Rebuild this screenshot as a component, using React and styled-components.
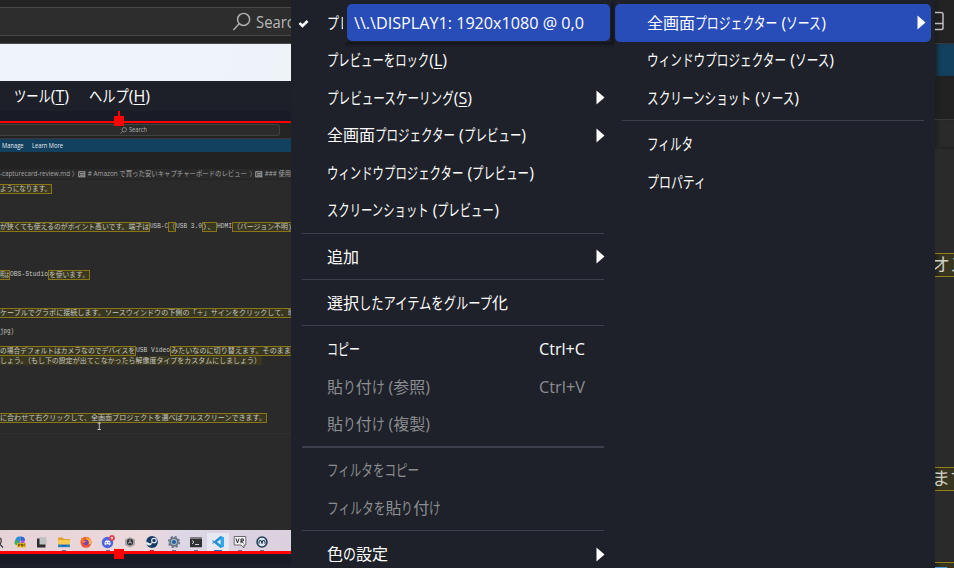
import React, { useLayoutEffect, useRef } from "react";
import styled, { createGlobalStyle } from "styled-components";

const Global = createGlobalStyle`
  * { box-sizing: border-box; }
  body { margin: 0; overflow: hidden; background: #1e2129; }
  svg { display: block; flex: none; }
`;

const Screen = styled.div`
  position: relative;
  display: grid;
  grid-template-columns: 291px 644px 19px;
  width: 954px;
  height: 568px;
  overflow: hidden;
  background: #1e2129;
  color: #fefefe;
  font-family: "Open Sans", "Noto Sans CJK JP", sans-serif;
`;

/* ---------- text that is condensed to a given width ---------- */

const FitBox = styled.span`
  display: inline-block;
  flex: none;
  white-space: pre;
  width: ${(p) => p.$w}px;
`;
const Run = styled.span`
  display: inline-block;
  white-space: pre;
  transform-origin: 0 50%;
`;
const Mnemonic = styled.span`
  text-decoration: underline;
  text-decoration-thickness: 1px;
  text-underline-offset: 2px;
`;

const KANA = /([\u3040-\u30ff\uff0b\u3001\u3002\uff08\uff09\u300c\u300d]+)/;

function renderRun(run) {
  const i = run.indexOf("&");
  if (i < 0) return run;
  return (
    <>
      {run.slice(0, i)}
      <Mnemonic>{run[i + 1]}</Mnemonic>
      {run.slice(i + 2)}
    </>
  );
}

/* Kana runs absorb the squeeze; kanji and latin keep their widths unless `all` is set. */
function Fit({ text, w, all }) {
  const ref = useRef(null);
  const runs = all ? [text] : text.split(KANA).filter(Boolean);
  const flexible = (r) => all || KANA.test(r) || runs.length === 1;
  useLayoutEffect(() => {
    const els = [...ref.current.children];
    els.forEach((el) => {
      el.style.width = "auto";
      el.style.transform = "none";
    });
    const sizes = els.map((el) => el.getBoundingClientRect().width);
    let fixed = 0;
    let loose = 0;
    sizes.forEach((s, i) => (flexible(runs[i]) ? (loose += s) : (fixed += s)));
    const k = loose ? (w - fixed) / loose : 1;
    els.forEach((el, i) => {
      if (!flexible(runs[i])) return;
      el.style.width = `${sizes[i] * k}px`;
      el.style.transform = `scaleX(${k})`;
    });
  }, [text, w, all]);
  return (
    <FitBox ref={ref} $w={w}>
      {runs.map((r, i) => (
        <Run key={i}>{renderRun(r)}</Run>
      ))}
    </FitBox>
  );
}

/* ---------- menus ---------- */

const Menus = styled.div`
  display: grid;
  grid-template-columns: 320px 324px;
  background: #1e2129;
`;
const Menu = styled.div`
  display: flex;
  flex-direction: column;
  padding: 4px ${(p) => (p.$second ? 4 : 0)}px 0 4px;
`;
const Item = styled.div`
  display: flex;
  align-items: center;
  flex: none;
  height: 37.5px;
  padding: 0 5px 0 32px;
  border-radius: 5px;
  font-size: 16px;
  line-height: 24px;
  color: ${(p) => (p.$disabled ? "#8c8d91" : "#fefefe")};
  background: ${(p) => (p.$active ? "#284cb8" : "transparent")};
`;
const CheckItem = styled(Item)`
  padding-left: 3px;
  gap: 18px;
`;
const Shortcut = styled.span`
  margin-left: auto;
  margin-right: 21.5px;
`;
const Arrow = styled.svg`
  margin-left: auto;
  margin-right: ${(p) => (p.$second ? 0.5 : 1)}px;
`;
const Separator = styled.div`
  flex: none;
  height: 8.75px;
  margin: 0 7px;
  padding-top: ${(p) => (p.$thick ? 3.25 : 3.75)}px;
  &::before {
    content: "";
    display: block;
    height: ${(p) => (p.$thick ? 2 : 1)}px;
    background: #3c404d;
  }
`;
const Popup = styled.div`
  position: absolute;
  left: 343px;
  top: 0;
  width: 268px;
  height: 42px;
  padding: 4px 1px 0 4px;
  background: #1e2129;
  box-shadow: 3px 3px 2px #14161c;
`;
const PopupItem = styled(Item)`
  height: 37px;
  padding: 0 0 0 7px;
`;

const RightArrow = ({ second }) => (
  <Arrow $second={second} width="9" height="15" viewBox="0 0 9 15">
    <path d="M0.5 0.5 L8.5 7.5 L0.5 14.5 Z" fill="#fff" />
  </Arrow>
);

const MAIN = [
  { t: "プレビューをロック(&L)", w: 120 },
  { t: "プレビュースケーリング(&S)", w: 145, sub: true },
  { t: "全画面プロジェクター (プレビュー)", w: 199, sub: true },
  { t: "ウィンドウプロジェクター (プレビュー)", w: 207 },
  { t: "スクリーンショット (プレビュー)", w: 172 },
  { sep: true },
  { t: "追加", w: 32, sub: true },
  { sep: true },
  { t: "選択したアイテムをグループ化", w: 181 },
  { sep: true },
  { t: "コピー", w: 33, key: "Ctrl+C" },
  { t: "貼り付け (参照)", w: 103, key: "Ctrl+V", disabled: true },
  { t: "貼り付け (複製)", w: 103, disabled: true },
  { sep: true, thick: true },
  { t: "フィルタをコピー", w: 92, disabled: true },
  { t: "フィルタを貼り付け", w: 114, disabled: true },
  { sep: true },
  { t: "色の設定", w: 61, sub: true },
];
const SOURCE = [
  { t: "全画面プロジェクター (ソース)", w: 179, sub: true, active: true },
  { t: "ウィンドウプロジェクター (ソース)", w: 187 },
  { t: "スクリーンショット (ソース)", w: 152 },
  { sep: true },
  { t: "フィルタ", w: 46 },
  { t: "プロパティ", w: 59 },
];

const MenuEntries = ({ items, second }) =>
  items.map((it, i) =>
    it.sep ? (
      <Separator key={i} $thick={it.thick} />
    ) : (
      <Item key={i} $active={it.active} $disabled={it.disabled}>
        <Fit text={it.t} w={it.w} />
        {it.key && (
          <Shortcut>
            <Fit text={it.key} w={46} />
          </Shortcut>
        )}
        {it.sub && <RightArrow second={second} />}
      </Item>
    )
  );

/* ---------- window behind the menu ---------- */

const Desktop = styled.div`
  display: flex;
  flex-direction: column;
  overflow: hidden;
  & > * { flex: none; }
`;
const TitleArea = styled.div`
  height: 44px;
  padding-top: 7px;
  background: #232323;
  border-bottom: 1px solid #4a4a4a;
`;
const SearchField = styled.div`
  display: flex;
  align-items: center;
  height: 29px;
  padding-left: 232px;
  gap: 5px;
  background: #2d2d2d;
  border-top: 1px solid #484848;
  border-bottom: 1px solid #484848;
  color: #b8b8b8;
  font-size: 16px;
  line-height: 24px;
  white-space: pre;
  overflow: hidden;
`;
const WhiteBar = styled.div`
  height: 37px;
  background: linear-gradient(100deg, #eef3fc 75%, #eef3f8);
`;
const MenuBar = styled.div`
  display: flex;
  align-items: center;
  height: 30px;
  padding: 0 0 1px 14px;
  gap: 20px;
  background: #1e2029;
  font-size: 16px;
  line-height: 24px;
`;
const PreviewMargin = styled.div`
  height: 10px;
  background: #191b26;
`;
const RedLine = styled.div`
  flex: none;
  height: ${(p) => p.$h}px;
  background: #fe0000;
`;
const Handle = styled.div`
  position: absolute;
  left: 114px;
  top: ${(p) => p.$y}px;
  width: 10px;
  height: 10px;
  background: #fe0000;
`;
const Stem = styled.div`
  position: absolute;
  left: 118px;
  top: 111px;
  width: 2px;
  height: 6px;
  background: #fe0000;
`;

/* ---------- captured editor ---------- */

const SmallTitle = styled.div`
  height: 16px;
  padding-top: 1px;
  background: #242424;
  border-bottom: 1px solid #373737;
`;
const SmallSearch = styled.div`
  display: flex;
  align-items: center;
  width: 280px;
  height: 12px;
  padding-left: 120px;
  gap: 2px;
  border: 1px solid #414141;
  border-left: 0;
  border-radius: 0 3px 3px 0;
  background: #2b2b2b;
  color: #b5b5b5;
  font-size: 6.3px;
  line-height: 10px;
`;
const Banner = styled.div`
  display: flex;
  align-items: center;
  height: 13px;
  padding: 0 0 0 1.5px;
  gap: 9px;
  background: #12405f;
  color: #e2eaf0;
  font-size: 6.3px;
  line-height: 12px;
`;
const Tabs = styled.div`
  height: 17px;
  background: #222222;
`;
const Crumbs = styled.div`
  display: flex;
  align-items: center;
  height: 11px;
  background: #292929;
  border-bottom: 1px solid #242424;
  color: #a4a4a4;
  font-size: 6.8px;
  line-height: 10px;
  white-space: nowrap;
`;
const Editor = styled.div`
  display: flex;
  flex-direction: column;
  height: 350px;
  padding-top: 4px;
  background: #2a2a2a;
  color: #c6c6c1;
  font-family: "Liberation Mono", "Noto Sans CJK JP", monospace;
  font-size: 7.4px;
  line-height: 8px;
`;
const Line = styled.div`
  display: flex;
  align-items: center;
  height: 10px;
  margin-top: ${(p) => p.$gap}px;
  white-space: nowrap;
`;
const Piece = styled.span`
  flex: none;
  height: ${(p) => (p.$flat ? 9 : 10)}px;
  overflow: hidden;
  border: ${(p) => (p.$mark ? "1px solid #8a7619" : "0 solid transparent")};
  border-left-width: ${(p) => (p.$mark && !p.$open ? 1 : 0)}px;
  ${(p) => p.$flat && "border-color: #39371f;"}
  background: ${(p) => (p.$mark ? "#39371f" : "transparent")};
`;
const EditorFoot = styled.div`
  margin-top: 10px;
  height: 1px;
  background: #303030;
`;

const LINES = [
  { gap: 0, p: [["ようになります。", 52, 1, 1]] },
  {
    gap: 28,
    p: [
      ["が狭くても使えるのがポイント高いです。端子は", 150, 1, 1],
      ["USB-C", 18],
      ["（", 8, 1],
      ["USB 3.0", 26],
      ["）、", 15, 1],
      ["HDMI", 15],
      ["（バージョン不明)", 61, 1],
    ],
  },
  { gap: 38, p: [["明は", 10, 1, 1], ["OBS-Studio", 38], ["を使います。", 42, 1]] },
  {
    gap: 28,
    p: [["ケーブルでグラボに接続します。ソースウインドウの下側の「＋」サインをクリックして、映", 296, 1, 1]],
  },
  { gap: 9, p: [["jpg)", 14]] },
  {
    gap: 9,
    p: [
      ["の場合デフォルトはカメラなのでデバイスを", 136, 1, 1],
      ["USB Video", 34],
      ["みたいなのに切り替えます。そのまま", 122, 1],
    ],
  },
  { gap: -1, p: [["しょう。（もし下の設定が出てこなかったら解像度タイプをカスタムにしましょう）", 262, 1, 1, 1]] },
  { gap: 48, p: [["に合わせて右クリックして、全画面プロジェクトを選べばフルスクリーンできます。", 267, 1, 1]] },
];

const Taskbar = styled.div`
  display: flex;
  align-items: flex-start;
  height: 21px;
  padding: 5px 0 0 9px;
  background: linear-gradient(90deg, #e6d3d8, #ecd9dc 50%, #dcd6e6 62%, #dbd0de);
`;
const TaskCell = styled.div`
  display: flex;
  flex-direction: column;
  align-items: center;
  flex: none;
  width: 22px;
  height: 16px;
  &::after {
    content: "";
    width: ${(p) => (p.$on ? 8 : 4)}px;
    height: 1px;
    margin-top: 1px;
    background: ${(p) => p.$dot || "transparent"};
  }
  ${(p) => p.$on && "background: #e8e8f2; box-shadow: 0 -2px 0 #e8e8f2;"}
`;
const BottomArea = styled.div`
  height: 14px;
  background: #191b26;
  border-bottom: 4px solid #1e2029;
`;
const Caret = styled.svg`
  position: absolute;
  left: 96px;
  top: 422px;
`;

const Magnifier = ({ size, color, sw }) => (
  <svg width={size} height={size} viewBox="0 0 18 18" fill="none" stroke={color} strokeWidth={sw}>
    <circle cx="11" cy="7" r="5.7" />
    <path d="M7 11 L1.3 17" />
  </svg>
);
const SymbolBox = () => (
  <svg width="8" height="7" viewBox="0 0 8 7" fill="none" stroke="#b5b5b5">
    <rect x="0.8" y="0.8" width="6" height="5" strokeWidth="0.9" />
    <path d="M2 2.7 h4 M2 4.2 h4" strokeWidth="0.9" />
  </svg>
);

const Ico = ({ children }) => (
  <svg width="14" height="14" viewBox="0 0 14 14">
    {children}
  </svg>
);

const icons = [
  [
    null,
    <Ico>
      <path d="M2 6 Q3 1.500 6 1.500 H9 Q7 6 6 9 H3 Q1 9 2 6" fill="#2a8fd4" />
      <path d="M8 2 Q12 2 12 5 L11 9 Q10 11 7 11 Z" fill="#b45bd0" />
      <path d="M2 6 L6 5 L5 10 H3 Q1 9 2 6" fill="#45ad52" />
      <path d="M8 2 Q11 1 12 5 L8 6Z" fill="#3367cf" />
      <rect x="4" y="8" width="9" height="4.500" rx="1" fill="#e9bd26" />
      <path d="M5.500 11.500 V9 H7 V10.300 H5.500 M8.500 11.500 V9 H9.500 V11.500 M11 11.500 V9 H12" stroke="#5a4210" strokeWidth="0.7" fill="none" />
    </Ico>,
  ],
  [
    null,
    <Ico>
      <rect x="2" y="3.500" width="8.500" height="9" fill="#2d2d30" />
      <rect x="4.500" y="2" width="7" height="7.500" fill="#c4c1c3" />
    </Ico>,
  ],
  [
    "#77727b",
    <Ico>
      <path d="M1 2.500 H5.500 L7 4 H13 V11 H1 Z" fill="#e0a226" />
      <rect x="1" y="5" width="12" height="6.500" fill="#f6cb50" />
      <path d="M1 9.500 H13 V12.200 H1 Z" fill="#2b80c4" />
      <path d="M4.500 10 H9.500 V11 H4.500Z" fill="#155b99" />
    </Ico>,
  ],
  [
    null,
    <Ico>
      <circle cx="7" cy="7.300" r="5.500" fill="#f0582b" />
      <path d="M7 1.500 Q8 3 11 4 Q13 6 12 9 Q10 10 8 8Z" fill="#ffb52d" />
      <path d="M1.500 6 L2.500 2.500 L5 4.500Z" fill="#f68127" />
      <circle cx="7" cy="7.500" r="2.800" fill="#7b43bd" />
      <path d="M3 6 Q5 4.800 7 6.500 L4.500 8Z" fill="#ff8b2d" />
    </Ico>,
  ],
  [
    "#77727b",
    <Ico>
      <circle cx="6.500" cy="7.500" r="5.700" fill="#5162df" />
      <path d="M3.500 9.500 Q3.500 6 5 5.500 H8 Q9.600 6 9.600 9.500 L8 10 L7.500 9.300 H5.500 L5 10Z" fill="#fff" />
      <circle cx="5.300" cy="7.800" r="0.700" fill="#5162df" />
      <circle cx="7.800" cy="7.800" r="0.700" fill="#5162df" />
      <circle cx="11" cy="2.900" r="2.900" fill="#dc4b4e" />
      <circle cx="11" cy="2.900" r="1" fill="#f3e4e4" />
    </Ico>,
  ],
  [
    null,
    <Ico>
      <path d="M7 2 L12 4.500 V10 L7 12.500 L2 10 V4.500Z" fill="#aaa6a8" />
      <circle cx="7" cy="7" r="3.200" fill="#38383b" />
      <path d="M7 4.500 V7 L5 8.300 M7 7 L9 8.300" stroke="#c5c5c5" strokeWidth="0.9" fill="none" />
    </Ico>,
  ],
  [
    "#c7292d",
    <Ico>
      <circle cx="7" cy="7" r="5.900" fill="#163b68" />
      <circle cx="9" cy="5.500" r="2.300" fill="none" stroke="#f2f4f7" strokeWidth="1.100" />
      <path d="M1 6.500 L5 8.500 L7.500 7 L6 10.300 L3.800 10.500 L1.300 9Z" fill="#f2f4f7" />
    </Ico>,
  ],
  [
    "#77727b",
    <Ico>
      <circle cx="7" cy="7" r="4.800" fill="#667485" />
      <circle cx="7" cy="7" r="5.300" fill="none" stroke="#667485" strokeWidth="1.600" strokeDasharray="2.200 1.963" />
      <circle cx="7" cy="7" r="2.900" fill="#b9c7d4" />
      <circle cx="7" cy="7" r="2.100" fill="#1d5fa3" />
    </Ico>,
  ],
  [
    "#77727b",
    <Ico>
      <rect x="1" y="2.500" width="12" height="9.800" rx="0.600" fill="#303134" />
      <rect x="1" y="2.500" width="12" height="1.500" fill="#7c7c80" />
      <path d="M3 5.500 L5 7.200 L3 9 M6 9.500 H10" stroke="#e4e4e4" strokeWidth="0.9" fill="none" />
    </Ico>,
  ],
  [
    "#1b6fbd",
    <Ico>
      <path d="M9.500 1 L13 2.600 V11.400 L9.500 13 L3 7.700 L1.800 8.800 L1 8.200 L2.400 7 L1 5.800 L1.800 5.200 L3 6.200Z" fill="#2391d8" />
      <path d="M9.700 4.200 V9.800 L6 7Z" fill="#e8e8f2" />
      <path d="M9.500 1 L13 2.600 V11.400 L9.500 13 L10.300 12 V2Z" fill="#32aaf0" />
    </Ico>,
  ],
  [
    "#77727b",
    <Ico>
      <path d="M1.200 1.500 H12.800 V10 H11 V13 L8 10 H1.200Z" fill="#f4f4f4" stroke="#5c5c60" strokeWidth="0.9" />
      <path d="M3 3.500 L4.500 8 L6 3.500 M8 8.200 V4 H10.300 V6 H8 L10.500 8.200" stroke="#252527" strokeWidth="1" fill="none" />
    </Ico>,
  ],
  [
    "#77727b",
    <Ico>
      <circle cx="7" cy="7" r="5" fill="#dfe6ee" stroke="#1f3b57" strokeWidth="1.500" />
      <path d="M4 8.800 V7 Q4 5.500 5.300 5.500 Q6.600 5.500 6.600 7 V8.500 M7.400 8.500 V7 Q7.400 5.500 8.700 5.500 Q10 5.500 10 7 V8.800" stroke="#1f3b57" strokeWidth="1.100" fill="none" />
    </Ico>,
  ],
];

const SearchEdge = styled.svg`
  position: absolute;
  left: 0;
  top: 537px;
`;

/* ---------- strip on the far right ---------- */

const Strip = styled.div`
  display: flex;
  flex-direction: column;
  height: 568px;
  overflow: hidden;
  background: #2a2a2a;
  font-size: 19px;
  color: #cfcfca;
  & > * {
    flex: none;
    box-shadow: inset 5px 0 4px -3px #1c1c1c;
  }
`;
const StripTop = styled.div`
  height: 43px;
  padding-top: 11px;
  background: #232323;
`;
const StripBlue = styled.div`
  height: 33px;
  background: #12405f;
  border-top: 1px solid #383838;
`;
const StripTabs = styled.div`
  height: 43px;
  background: #222222;
`;
const StripCrumb = styled.div`
  height: 30px;
  background: #2a2a2a;
  border-top: 1px solid #383838;
  border-bottom: 2px solid #222222;
`;
const StripMark = styled.div`
  height: 24px;
  margin-top: ${(p) => p.$gap}px;
  border-top: 1px solid #93801c;
  border-bottom: 1px solid #93801c;
  background: #37351f;
  font-size: 18px;
  line-height: 20px;
  white-space: nowrap;
  overflow: hidden;
  color: ${(p) => p.$c || "#cfcfca"};
  text-indent: -3px;
`;

export default function App() {
  return (
    <Screen>
      <Global />
      <Desktop>
        <TitleArea>
          <SearchField>
            <Magnifier size={19} color="#b0b0b0" sw={1.4} />
            <Fit text="Search" w={47} />
          </SearchField>
        </TitleArea>
        <WhiteBar />
        <MenuBar>
          <Fit text="ツール(&T)" w={55} />
          <Fit text="ヘルプ(&H)" w={61} />
        </MenuBar>
        <PreviewMargin />
        <RedLine $h={2} />
        <SmallTitle>
          <SmallSearch>
            <Magnifier size={7} color="#a0a0a0" sw={1.8} />
            <Fit text="Search" w={18} />
          </SmallSearch>
        </SmallTitle>
        <Banner>
          <Fit text="Manage" w={21.5} />
          <Fit text="Learn More" w={31} />
        </Banner>
        <Tabs />
        <Crumbs>
          <Fit all text="-capturecard-review.md" w={70} />
          <Fit all text=" 〉" w={8} />
          <SymbolBox />
          <Fit all text=" # Amazon で買った安いキャプチャーボードのレビュー" w={161} />
          <Fit all text="  〉" w={8} />
          <SymbolBox />
          <Fit all text=" ### 使用" w={28} />
        </Crumbs>
        <Editor>
          {LINES.map((l, i) => (
            <Line key={i} $gap={l.gap}>
              {l.p.map(([t, w, mark, open, flat], j) => (
                <Piece key={j} $mark={mark} $open={open} $flat={flat}>
                  <Fit all text={t} w={w - (mark ? (open ? 1 : 2) : 0)} />
                </Piece>
              ))}
            </Line>
          ))}
          <EditorFoot />
        </Editor>
        <Taskbar>
          {icons.map(([dot, icon], i) => (
            <TaskCell key={i} $dot={dot} $on={i === 9}>
              {icon}
            </TaskCell>
          ))}
        </Taskbar>
        <RedLine $h={3} />
        <BottomArea />
      </Desktop>

      <Menus>
        <Menu>
          <CheckItem>
            <svg width="11" height="10" viewBox="0 0 11 10">
              <path d="M1.500 5 L4.500 8 L9.500 3" stroke="#fff" strokeWidth="2.600" fill="none" />
            </svg>
            <Fit text="プレビュー" w={60} />
          </CheckItem>
          <MenuEntries items={MAIN} />
        </Menu>
        <Menu $second>
          <MenuEntries items={SOURCE} second />
        </Menu>
      </Menus>

      <Strip>
        <StripTop>
          <svg width="19" height="22" viewBox="0 0 19 22" fill="none" stroke="#bdbdbd" strokeWidth="1.500">
            <path d="M-4 1.500 H6 Q8 1.500 8 3.500 V17 Q8 18.500 6 18.500 H-4 M-4 12.500 H8" />
          </svg>
        </StripTop>
        <StripBlue />
        <StripTabs />
        <StripCrumb />
        <StripMark $gap={104}>オス</StripMark>
        <StripMark $gap={190}>ます</StripMark>
        <StripMark $gap={71} $c="#4ba0d8">フ</StripMark>
      </Strip>

      <Popup>
        <PopupItem $active>
          <Fit text="\\.\DISPLAY1: 1920x1080 @ 0,0" w={230} />
        </PopupItem>
      </Popup>

      <Stem />
      <Handle $y={116} />
      <Handle $y={549} />
      <SearchEdge width="4" height="12" viewBox="0 0 4 12" fill="none" stroke="#333" strokeWidth="1.200">
        <path d="M0 1 Q2.500 3 0 7.500 M0 7.500 L3 10.500" />
      </SearchEdge>
      <Caret width="7" height="9" viewBox="0 0 7 9" stroke="#d0d0d0" strokeWidth="0.900" fill="none">
        <path d="M1.500 1 H5 M3.300 1 V7.500 M1.500 7.500 H5" />
      </Caret>
    </Screen>
  );
}
